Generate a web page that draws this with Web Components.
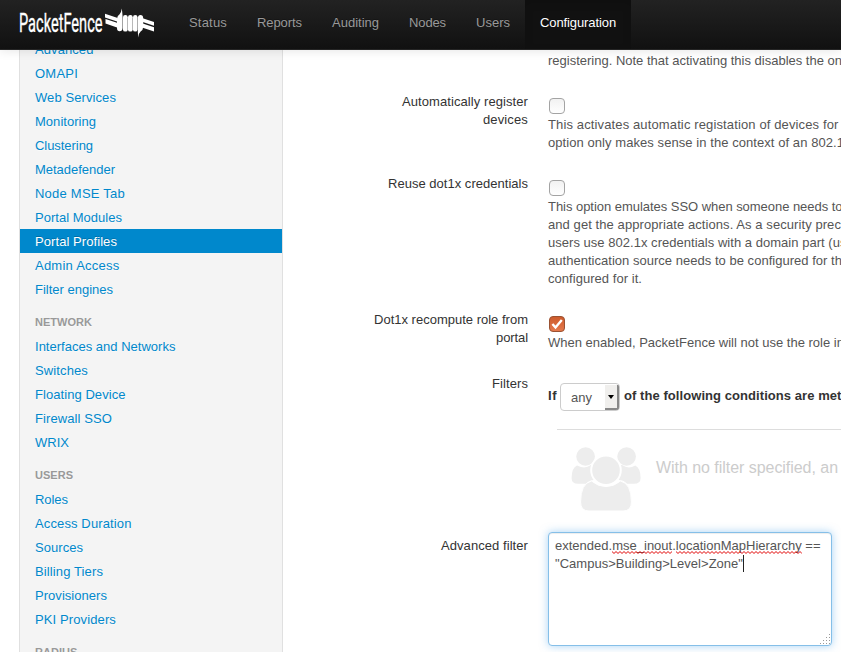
<!DOCTYPE html>
<html lang="en">
<head>
<meta charset="utf-8">
<title>PacketFence - Configuration</title>
<style>
html, body { margin: 0; height: 100%; overflow: hidden; background: #fff; }
body { font: 13px/18px "Liberation Sans", Arial, sans-serif; color: #333; }
</style>
</head>
<body>
<pf-app></pf-app>
<script>
const define = (name, html, setup) => customElements.define(name, class extends HTMLElement {
  connectedCallback() {
    if (this.shadowRoot) return;
    this.attachShadow({ mode: 'open' }).innerHTML = html;
    if (setup) setup(this, this.shadowRoot);
  }
});

/* A single line of text whose tracking is adjusted to a given width. */
define('fit-text', `<style>
:host { display: block; white-space: nowrap; width: max-content; }
</style><slot></slot>`, el => {
  const want = +el.getAttribute('w');
  const n = el.textContent.length;
  const natural = el.getBoundingClientRect().width;
  if (want && natural) el.style.letterSpacing = ((want - natural) / n) + 'px';
});

define('pf-logo', `<style>
:host { display: block; width: 140px; height: 40px; }
svg { display: block; }
</style>
<svg width="140" height="40" viewBox="18 0 140 40">
<text x="19" y="31.8" textLength="83.5" lengthAdjust="spacingAndGlyphs" font-family="Roboto, sans-serif" font-size="25.5" fill="#fff" stroke="#fff" stroke-width=".35">PacketFence</text>
<g fill="#fff">
<path d="M105 13.7 L117 17.7 V21.4 L105 17.6Z M105.5 19 L117 22.8 V27.6 L105.5 23.4Z"/>
<path d="M142 18 L154 22 V25.8 L142 21.8Z M142 23.2 L154 27.2 V31.6 L142 27.6Z"/>
<path d="M121.8 8.5 Q122.6 15 122.6 18 V28 Q122.4 31.3 119.7 31.3 Q117 31.3 117 28 V18.5 Q117.4 15.4 119.6 14.2 Q121.2 12.8 121.8 8.5Z"/>
<rect x="123" y="15" width="4.7" height="16.6" rx="2.2"/>
<rect x="128" y="15" width="4.7" height="16.6" rx="2.2"/>
<rect x="133" y="15" width="4.5" height="16.6" rx="2.2"/>
<path d="M138.2 37.5 Q137.7 31 137.7 27 V18.4 Q138 15 140.4 15 Q143.2 15 143.2 18.4 V27 Q143 30.3 140.6 31.6 Q138.8 33 138.2 37.5Z"/>
</g></svg>`);

define('nav-item', `<style>
:host { display: flex; box-sizing: border-box; height: 49px; padding: 14px 15px 0; color: #999; text-shadow: 0 -1px 0 rgba(0,0,0,.25); }
:host([active]) { color: #fff; background: #111; box-shadow: inset 0 3px 8px rgba(0,0,0,.125); }
</style><slot></slot>`);

define('pf-navbar', `<style>
:host { display: flex; box-sizing: border-box; height: 50px; flex: none; padding-left: 18px; background: linear-gradient(#222, #111); border-bottom: 1px solid #252525; box-shadow: 0 1px 10px rgba(0,0,0,.1); position: relative; z-index: 2; }
pf-logo { margin-right: 16px; }
</style><pf-logo></pf-logo><slot></slot>`);

define('side-link', `<style>
:host { display: block; height: 20px; padding: 4px 15px 0; color: #08c; text-shadow: 0 1px 0 rgba(255,255,255,.5); }
:host([active]) { color: #fff; background: #08c; text-shadow: 0 -1px 0 rgba(0,0,0,.2); }
</style><slot></slot>`);

define('side-head', `<style>
:host { display: block; margin-top: 9px; height: 21px; padding: 3px 15px 0; color: #999; font-size: 11px; font-weight: bold; text-transform: uppercase; text-shadow: 0 1px 0 rgba(255,255,255,.5); }
</style><slot></slot>`);

define('side-nav', `<style>
:host { display: block; box-sizing: border-box; width: 264px; margin-left: 19px; flex: none; background: #f4f4f4; border: solid #e0e0e0; border-width: 0 1px; overflow: hidden; }
div { margin-top: -13px; }
</style><div><slot></slot></div>`);

define('form-row', `<style>
:host { display: grid; grid-template-columns: 245px 293px; column-gap: 20px; margin-bottom: 23px; }
.label { display: flex; flex-direction: column; align-items: flex-end; }
.body { min-width: 0; color: #555; }
</style><div class="label"><slot name="label"></slot></div><div class="body"><slot></slot></div>`);

define('check-box', `<style>
:host { display: block; height: 18px; padding: 5px 0 0 1px; }
svg { display: block; }
</style>`, (el, root) => {
  const on = el.hasAttribute('checked');
  root.innerHTML += `<svg width="16" height="16"><defs>
  <linearGradient id="g" x2="0" y2="1"><stop stop-color="${on ? '#cc5a2b' : '#f1f1f1'}"/><stop offset="1" stop-color="${on ? '#e67a4d' : '#fff'}"/></linearGradient></defs>
  <rect x=".5" y=".5" width="15" height="15" rx="3.5" fill="url(#g)" stroke="${on ? '#9a5233' : '#a3a3a3'}"/>
  ${on ? '<path d="M3.4 8 L6.5 11.4 L12.8 3.9" fill="none" stroke="#fff" stroke-width="2.4"/>' : ''}</svg>`;
});

define('pick-list', `<style>
:host { display: flex; flex: none; box-sizing: border-box; width: 60px; height: 28px; border: 1px solid #ccc; border-radius: 4px; overflow: hidden; background: #fff; font-weight: normal; color: #555; }
.v { flex: 1; padding: 5px 0 0 10px; }
.b { box-sizing: border-box; width: 14px; margin-top: 1px; background: #f0efed; border-right: 2px solid #888; border-bottom: 2px solid #888; display: flex; justify-content: center; align-items: center; }
</style><div class="v"><slot></slot></div><div class="b"><svg width="6" height="4"><path d="M0 0h6L3 4z" fill="#000"/></svg></div>`);

define('filter-rule', `<style>
:host { display: flex; align-items: flex-start; padding-top: 8px; height: 28px; font-weight: bold; color: #333; }
.a { width: 12px; flex: none; padding-top: 4px; }
.z { flex: none; padding: 4px 0 0 4px; }
</style><div class="a"><slot name="before"></slot></div><slot name="select"></slot><div class="z"><slot></slot></div>`);

define('empty-note', `<style>
:host { display: flex; box-sizing: border-box; height: 85px; margin: 18px 0 0 9px; padding: 16px 0 0 14px; border-top: 1px solid #ddd; font-size: 16px; color: #ccc; }
svg { flex: none; margin-right: 15px; }
.t { padding-top: 13px; }
</style>
<svg width="70" height="66" viewBox="0 0 70 66" fill="#ededed">
<circle cx="14.6" cy="10.5" r="9.3"/><circle cx="55.6" cy="10.5" r="9.3"/>
<path d="M6 19.5 Q.6 22 .6 32 Q.6 37.8 7 37.8 H15 Q18 34 23 34 L28 19 H20 Q15 22.5 10 21Z"/>
<path d="M64.2 19.5 Q69.6 22 69.6 32 Q69.6 37.8 63 37.8 H56 Q53 34 48 34 L43 19 H51 Q56 22.5 61 21Z"/>
<circle cx="35" cy="24.2" r="14.8" stroke="#fff" stroke-width="2"/>
<path d="M20.5 35 Q9.6 37.5 9.6 56 Q9.6 65 18 65 H52 Q60.4 65 60.4 56 Q60.4 37.5 49.5 35 Q43 40.6 35 40.6 Q27 40.6 20.5 35Z" stroke="#fff" stroke-width="1"/>
</svg><div class="t"><slot></slot></div>`);

define('text-area', `<style>
:host { display: flex; flex-direction: column; box-sizing: border-box; width: 284px; height: 114px; margin-top: -5px; padding: 4px 6px; border: 1px solid #85bfe8; border-radius: 4px; background: #fff; box-shadow: inset 0 1px 1px rgba(0,0,0,.075), 0 0 8px rgba(82,168,236,.5); position: relative; }
svg { position: absolute; right: 1px; bottom: 1px; }
</style><slot></slot>
<svg width="10" height="10" fill="#999"><path d="M9 0h1v1h-1zM9 3h1v1h-1zM6 3h1v1h-1zM9 6h1v1h-1zM6 6h1v1h-1zM3 6h1v1h-1zM9 9h1v1h-1zM6 9h1v1h-1zM3 9h1v1h-1zM0 9h1v1h-1z"/></svg>`);

/* A misspelled word: zigzag drawn under the text. */
define('spell-mark', `<style>
:host { display: inline-block; height: 18px; vertical-align: top; position: relative; }
svg { position: absolute; left: 0; top: 14px; width: 100%; height: 3px; }
</style><slot></slot><svg><defs><pattern id="p" width="4" height="3" patternUnits="userSpaceOnUse"><path d="M-1 1.5 L0 .5 L2 2.5 L4 .5 L5 1.5" fill="none" stroke="#e00000" stroke-width="1"/></pattern></defs><rect width="100%" height="3" fill="url(#p)"/></svg>`);

define('text-caret', `<style>:host { display: block; width: 1px; height: 17px; background: #222; }</style>`);
define('caret-line', `<style>:host { display: flex; }</style><slot></slot>`);

const links = (list, active) => list.map(([t, w]) =>
  `<side-link${t === active ? ' active' : ''}><fit-text w="${w}">${t}</fit-text></side-link>`).join('');
const nav = [['Status', 38], ['Reports', 45], ['Auditing', 47], ['Nodes', 37], ['Users', 34], ['Configuration', 76]];

define('pf-app', `<style>
:host { display: flex; flex-direction: column; height: 100vh; overflow: hidden; }
.page { display: flex; flex: 1; min-height: 0; }
main { flex: 1; min-width: 0; overflow: hidden; padding-top: 2px; }
</style>
<pf-navbar>${nav.map(([t, w]) => `<nav-item${t === 'Configuration' ? ' active' : ''}><fit-text w="${w}">${t}</fit-text></nav-item>`).join('')}</pf-navbar>
<div class="page">
<side-nav>
${links([['Advanced', 58.5], ['OMAPI', 43], ['Web Services', 81], ['Monitoring', 61], ['Clustering', 58], ['Metadefender', 80], ['Node MSE Tab', 90], ['Portal Modules', 87], ['Portal Profiles', 82], ['Admin Access', 84.5], ['Filter engines', 78]], 'Portal Profiles')}
<side-head><fit-text w="57">Network</fit-text></side-head>
${links([['Interfaces and Networks', 140.5], ['Switches', 53], ['Floating Device', 90.5], ['Firewall SSO', 77], ['WRIX', 34]])}
<side-head><fit-text w="38">Users</fit-text></side-head>
${links([['Roles', 33], ['Access Duration', 96.5], ['Sources', 48], ['Billing Tiers', 68], ['Provisioners', 72], ['PKI Providers', 81]])}
<side-head><fit-text w="42.5">Radius</fit-text></side-head>
</side-nav>
<main>
<form-row><fit-text w="294">registering. Note that activating this disables the on</fit-text></form-row>
<form-row><fit-text slot="label" w="126">Automatically register</fit-text><fit-text slot="label" w="45">devices</fit-text>
<check-box></check-box>
<fit-text w="290.5">This activates automatic registation of devices for</fit-text>
<fit-text w="296">option only makes sense in the context of an 802.1</fit-text></form-row>
<form-row><fit-text slot="label" w="140">Reuse dot1x credentials</fit-text>
<check-box></check-box>
<fit-text w="294.5">This option emulates SSO when someone needs to</fit-text>
<fit-text w="293">and get the appropriate actions. As a security prec</fit-text>
<fit-text w="298.5">users use 802.1x credentials with a domain part (us</fit-text>
<fit-text w="294">authentication source needs to be configured for th</fit-text>
<fit-text w="94">configured for it.</fit-text></form-row>
<form-row><fit-text slot="label" w="154">Dot1x recompute role from</fit-text><fit-text slot="label" w="32">portal</fit-text>
<check-box checked></check-box>
<fit-text w="296">When enabled, PacketFence will not use the role in</fit-text></form-row>
<form-row><fit-text slot="label" w="36">Filters</fit-text>
<filter-rule><fit-text slot="before" w="9">If</fit-text><pick-list slot="select"><fit-text w="21">any</fit-text></pick-list><fit-text w="217.5">of the following conditions are met</fit-text></filter-rule>
<empty-note><fit-text w="182">With no filter specified, an</fit-text></empty-note></form-row>
<form-row><fit-text slot="label" w="87">Advanced filter</fit-text>
<text-area><fit-text w="265.5">extended.<spell-mark>mse_inout</spell-mark>.<spell-mark>locationMapHierarchy</spell-mark> ==</fit-text><caret-line><fit-text w="188">"Campus&gt;Building&gt;Level&gt;Zone"</fit-text><text-caret></text-caret></caret-line></text-area></form-row>
</main></div>`);
</script>
</body>
</html>
